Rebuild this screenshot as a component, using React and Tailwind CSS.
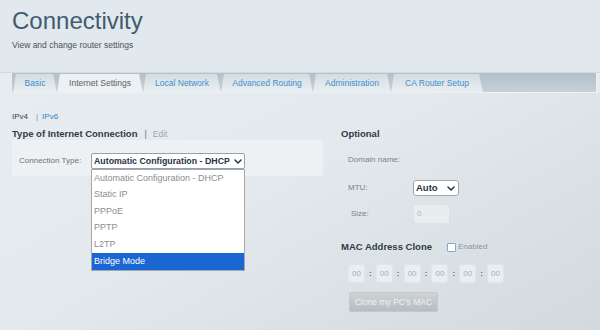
import React from "react";

const Chevron = ({ className = "" }) => (
  <svg width="8" height="5" viewBox="0 0 8 5" className={className}>
    <path d="M1 1 L4 4 L7 1" fill="none" stroke="#2a3440" strokeWidth="1.5" strokeLinecap="round" strokeLinejoin="round" />
  </svg>
);

const tabs = [
  { label: "Basic", w: "w-[44px]" },
  { label: "Internet Settings", w: "w-[86px]", active: true },
  { label: "Local Network", w: "w-[78px]" },
  { label: "Advanced Routing", w: "w-[92px]" },
  { label: "Administration", w: "w-[78px]" },
  { label: "CA Router Setup", w: "w-[92px]" },
];

const options = [
  "Automatic Configuration - DHCP",
  "Static IP",
  "PPPoE",
  "PPTP",
  "L2TP",
  "Bridge Mode",
];

export default function App() {
  return (
    <div className="w-[600px] h-[330px] overflow-hidden bg-gradient-to-br from-[#e7edf1] via-[#e3e9ed] to-[#d2dadf] font-['Liberation_Sans',Arial,sans-serif]">
      {/* Header */}
      <div className="h-[72px] bg-[#e2e9ee] px-[12px] pt-[7px]">
        <h1 className="text-[24px] leading-[28px] text-[#3f5c70]">Connectivity</h1>
        <p className="mt-[5px] text-[8.5px] leading-[10px] text-[#4a5258]">View and change router settings</p>
      </div>

      {/* Tabs */}
      <div className="border-t border-[#d3dbe1] bg-[#e6ecf0]">
        <div className="ml-[12px] w-[585px] h-[20px] flex bg-gradient-to-b from-[#b2c0c9] to-[#c7d1d7] border-r border-b border-[#f1f4f6] pl-[1px]">
          {tabs.map((t) => (
            <div
              key={t.label}
              className={`${t.w} h-[19px] mt-[1px] flex items-center justify-center text-[8.5px] [clip-path:polygon(3px_0,calc(100%-4px)_0,100%_100%,0_100%)] ${
                t.active
                  ? "bg-[#edf1f3] text-[#5a6167]"
                  : "bg-gradient-to-b from-[#d4dde2] to-[#ebf0f2] text-[#3d8fd1]"
              }`}
            >
              {t.label}
            </div>
          ))}
        </div>
      </div>

      {/* Content */}
      <div className="flex px-[12px]">
        {/* Left column */}
        <div className="w-[311px]">
          <div className="mt-[19px] h-[10px] flex items-center text-[8px] leading-[10px]">
            <span className="text-[#3a4147]">IPv4</span>
            <span className="ml-[8px] text-[#8a9096]">|</span>
            <span className="ml-[4px] text-[#2f86c8]">IPv6</span>
          </div>
          <div className="mt-[6px] h-[12px] flex items-center leading-[12px]">
            <span className="text-[9.5px] font-bold text-[#2f3b45]">Type of Internet Connection</span>
            <span className="ml-[7px] text-[9px] text-[#6d757b]">|</span>
            <span className="ml-[6px] text-[8.5px] text-[#a0a8ae]">Edit</span>
          </div>
          <div className="h-[36px] bg-[#edf1f4] flex items-start pt-[13px] pl-[7px]">
            <span className="w-[72px] text-[8px] leading-[16px] text-[#6b7378]">Connection Type:</span>
            <div className="relative w-[154px]">
              <div className="h-[16px] bg-white border border-[#9aa0a5] rounded-[2px] flex items-center justify-between pl-[2px] pr-[2px]">
                <span className="text-[8.8px] font-bold text-[#2a3440] leading-[14px] whitespace-nowrap">Automatic Configuration - DHCP</span>
                <Chevron />
              </div>
              <div className="absolute top-[16px] left-0 w-[154px] bg-white border border-[#a3a8ac] z-10">
                {options.map((o, i) => (
                  <div
                    key={o}
                    className={`h-[16.6px] flex items-center pl-[2px] text-[9px] whitespace-nowrap ${
                      i === options.length - 1 ? "bg-[#1a67d3] text-white" : "text-[#8a8d90]"
                    }`}
                  >
                    {o}
                  </div>
                ))}
              </div>
            </div>
          </div>
        </div>

        {/* Right column */}
        <div className="ml-[18px] pt-[35px]">
          <div className="h-[12px] leading-[12px] text-[9.5px] font-bold text-[#2f3b45]">Optional</div>

          <div className="mt-[14px] h-[12px] pl-[7px] flex items-center text-[8px] text-[#7b8388]">Domain name:</div>

          <div className="mt-[14px] h-[16px] pl-[7px] flex items-center">
            <span className="w-[65px] text-[8px] text-[#7b8388]">MTU:</span>
            <div className="w-[46px] h-[16px] bg-white border border-[#a0a6ab] rounded-[3px] flex items-center justify-between pl-[2px] pr-[3px]">
              <span className="text-[9.5px] font-bold text-[#2a3440]">Auto</span>
              <Chevron />
            </div>
          </div>

          <div className="mt-[8px] h-[20px] pl-[7px] flex items-center">
            <span className="w-[65px] pl-[3px] text-[8px] text-[#7b8388]">Size:</span>
            <div className="w-[37px] h-[20px] bg-[#e8edf0] border border-[#dbe1e5] rounded-[2px] flex items-center pl-[3px] text-[8px] text-[#a9b1b7]">0</div>
          </div>

          <div className="mt-[17px] h-[12px] flex items-center">
            <span className="text-[9.5px] font-bold text-[#2f3b45] leading-[12px]">MAC Address Clone</span>
            <span className="ml-[15px] w-[9px] h-[9px] bg-white border border-[#7eaacb] rounded-[1px]"></span>
            <span className="ml-[2px] text-[8px] text-[#8d959b]">Enabled</span>
          </div>

          <div className="mt-[11px] h-[19px] pl-[7px] flex items-center">
            {[0, 1, 2, 3, 4, 5].map((i) => (
              <React.Fragment key={i}>
                {i > 0 && <span className="w-[10.8px] text-center text-[8px] font-bold text-[#5f676d]">:</span>}
                <div className="w-[17px] h-[19px] bg-[#e9eef1] border border-[#dfe5e9] rounded-[2px] flex items-center justify-center text-[8px] text-[#a6aeb4]">00</div>
              </React.Fragment>
            ))}
          </div>

          <div className="mt-[9px] ml-[8px] w-[89px] h-[20px] rounded-[2px] bg-gradient-to-b from-[#cfd3d6] to-[#b7bcbf] border border-[#c3c8cb] flex items-center justify-center text-[8.5px] text-[#eef1f3]">
            Clone my PC's MAC
          </div>
        </div>
      </div>
    </div>
  );
}
